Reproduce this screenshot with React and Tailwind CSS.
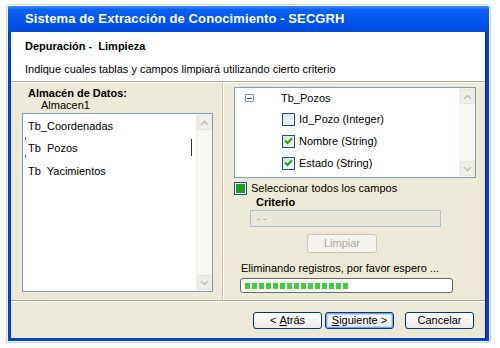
import React from "react";

function Chevron({ up }) {
  return (
    <svg width="9" height="6" viewBox="0 0 9 6">
      <path d={up ? "M1 5 L4.5 1.5 L8 5" : "M1 1 L4.5 4.5 L8 1"} fill="none" stroke="#c3c3c0" strokeWidth="1.6" />
    </svg>
  );
}

function Scrollbar({ h }) {
  return (
    <div className="w-[16px] flex flex-col bg-[#f7f6f1] border-l border-[#f0efe8]" style={{ height: h }}>
      <div className="h-[15px] w-[15px] mx-auto mt-[1px] rounded-[2px] bg-[#eeede6] border border-[#e4e3dc] flex items-center justify-center">
        <Chevron up />
      </div>
      <div className="flex-1" />
      <div className="h-[15px] w-[15px] mx-auto mb-[1px] rounded-[2px] bg-[#eeede6] border border-[#e4e3dc] flex items-center justify-center">
        <Chevron />
      </div>
    </div>
  );
}

function Check({ checked }) {
  return (
    <div className="w-[13px] h-[13px] border border-[#1c5180] bg-gradient-to-br from-[#dcdcd6] to-[#ffffff] flex items-center justify-center">
      {checked && (
        <svg width="9" height="8" viewBox="0 0 9 8">
          <path d="M1 3.5 L3.5 6 L8 1.2" fill="none" stroke="#21a121" strokeWidth="2" />
        </svg>
      )}
    </div>
  );
}

function XPButton({ children, focused }) {
  return (
    <div
      className={
        "w-[69px] h-[17px] rounded-[3px] border border-[#003c74] bg-gradient-to-b from-[#ffffff] to-[#ecebe6] flex items-center justify-center text-[11px] text-black " +
        (focused ? "shadow-[inset_0_0_0_1px_#7ba3e6,inset_0_0_0_2px_#c0d6f7]" : "")
      }
    >
      {children}
    </div>
  );
}

export default function App() {
  return (
    <div className="w-[500px] h-[348px] bg-white pl-[6px] pt-[4px] font-['Liberation_Sans',Arial,sans-serif] text-black">
      <div className="w-[485px] h-[339px] border border-[#c5d9f3] rounded-t-[3px] p-[1px] pb-[1px]">
        <div className="w-[481px] h-[335px] flex flex-col bg-[#0041d6] rounded-t-[2px] overflow-hidden">
          {/* Title bar */}
          <div className="h-[26px] shrink-0 bg-[linear-gradient(to_bottom,#3f8cf6_0%,#0a5ef2_15%,#0055ea_60%,#004ad8_100%)] flex items-center pl-[17px]">
            <span className="text-white font-bold text-[13px] tracking-[0.1px]">
              Sistema de Extracción de Conocimiento - SECGRH
            </span>
          </div>
          {/* client area */}
          <div className="flex-1 mx-[3px] mb-[3px] border-r border-[#0019b0] flex flex-col bg-[#ece9d8]">
            {/* header */}
            <div className="h-[50px] shrink-0 bg-white border-b border-[#aca899] pl-[14px] flex flex-col">
              <div className="mt-[7px] text-[11px] font-bold leading-[14px]">Depuración -&nbsp; Limpieza</div>
              <div className="mt-[9px] text-[11px] leading-[14px]">Indique cuales tablas y campos limpiará utilizando cierto criterio</div>
            </div>
            {/* body */}
            <div className="h-[218px] shrink-0 flex border-t border-white">
              {/* left panel */}
              <div className="w-[212px] shrink-0 border-r border-[#c9c6b6] pl-[11px] pt-[4px] flex flex-col">
                <div className="pl-[6px] text-[11px] font-bold leading-[13px]">Almacén de Datos:</div>
                <div className="pl-[19px] text-[11px] leading-[13px] mt-[-1px]">Almacen1</div>
                <div className="mt-[1px] w-[191px] h-[179px] border border-[#7f9db9] bg-white flex">
                  <div className="flex-1 flex flex-col text-[11px] leading-[14px]">
                    <div className="pl-[5px] h-[23px] flex items-center">Tb_Coordenadas</div>
                    <div className="ml-[2px] mr-[4px] h-[21px] flex items-center justify-between">
                      <div className="flex flex-col justify-between h-full">
                        <div className="w-[1px] h-[3px] bg-[#666]" />
                        <div className="w-[1px] h-[3px] bg-[#666]" />
                      </div>
                      <span className="flex-1 pl-[2px]">Tb&nbsp; Pozos</span>
                      <div className="w-[1px] h-[17px] bg-[#333]" />
                    </div>
                    <div className="pl-[5px] h-[26px] flex items-center">Tb&nbsp; Yacimientos</div>
                  </div>
                  <Scrollbar h={177} />
                </div>
              </div>
              {/* right panel */}
              <div className="flex-1 border-l border-white pl-[10px] pt-[4px] flex flex-col">
                <div className="w-[242px] h-[91px] border border-[#7f9db9] bg-white flex">
                  <div className="flex-1 flex flex-col text-[11px] leading-[14px]">
                    <div className="h-[20px] flex items-center">
                      <div className="ml-[10px] w-[9px] h-[8px] border border-[#7a8da8] rounded-[1px] bg-white flex items-center justify-center">
                        <div className="w-[5px] h-[1px] bg-[#333]" />
                      </div>
                      <span className="ml-[27px]">Tb_Pozos</span>
                    </div>
                    {[
                      ["Id_Pozo (Integer)", false],
                      ["Nombre (String)", true],
                      ["Estado (String)", true],
                    ].map(([t, c]) => (
                      <div key={t} className="h-[22px] flex items-center pl-[47px]">
                        <Check checked={c} />
                        <span className="ml-[4px]">{t}</span>
                      </div>
                    ))}
                  </div>
                  <Scrollbar h={89} />
                </div>
                <div className="mt-[4px] flex items-center text-[11px] leading-[13px]">
                  <div className="w-[13px] h-[13px] border border-[#1c5180] bg-white flex items-center justify-center">
                    <div className="w-[9px] h-[9px] bg-[#1e9c1e]" />
                  </div>
                  <span className="ml-[4px]">Seleccionar todos los campos</span>
                </div>
                <div className="pl-[22px] mt-[1px] text-[11px] font-bold leading-[13px]">Criterio</div>
                <div className="ml-[16px] mt-[1px] w-[191px] h-[17px] border border-[#aebfd6] bg-[#e9e7dc] flex items-center pl-[6px]">
                  <span className="text-[10px] text-[#a9a9a0] leading-none">- -</span>
                </div>
                <div className="ml-[73px] mt-[7px] w-[70px] h-[19px] rounded-[3px] border border-[#cac8bb] bg-[#f4f3ee] flex items-center justify-center text-[11px] text-[#aca899]">
                  Limpiar
                </div>
                <div className="ml-[7px] mt-[9px] text-[11px] leading-[13px]">Eliminando registros, por favor espero ...</div>
                <div className="ml-[6px] mt-[3px] w-[213px] h-[15px] rounded-[3px] border border-[#686868] bg-white flex items-center pl-[4px] gap-[2px]">
                  {Array.from({ length: 15 }).map((_, i) => (
                    <div key={i} className="w-[5px] h-[6px] bg-[#3ecf3e]" />
                  ))}
                </div>
              </div>
            </div>
            {/* separator + buttons */}
            <div className="flex-1 border-t border-[#aca899] flex flex-col">
              <div className="flex-1 border-t border-white flex items-start pt-[10px] pl-[242px] gap-[3px]">
                <XPButton>
                  &lt; <span className="underline ml-[3px]">A</span>trás
                </XPButton>
                <XPButton focused>
                  <span className="underline">S</span>iguiente &gt;
                </XPButton>
                <div className="ml-[8px]">
                  <XPButton>Cancelar</XPButton>
                </div>
              </div>
            </div>
          </div>
        </div>
      </div>
    </div>
  );
}
